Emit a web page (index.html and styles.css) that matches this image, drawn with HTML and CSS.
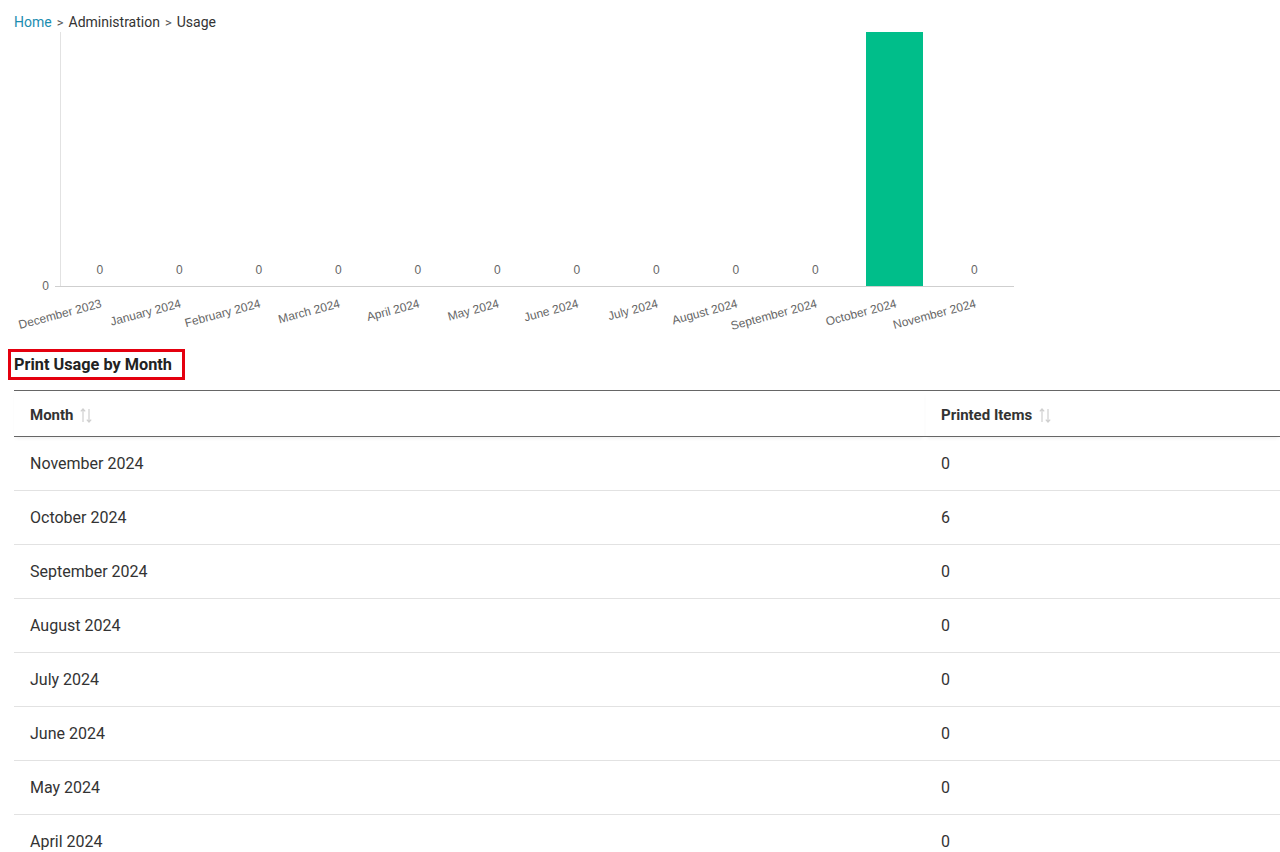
FILE: index.html
```html
<!DOCTYPE html>
<html lang="en">
<head>
  <meta charset="UTF-8" />
  <title>Usage</title>
  <link rel="stylesheet" href="styles.css">
</head>
<body>

<div class="page">
  <nav class="crumbs">
    <a href="#">Home</a><span class="sep">&gt;</span><span>Administration</span><span class="sep">&gt;</span><span>Usage</span>
  </nav>

  <svg class="chart" width="1020" height="312" viewBox="0 0 1020 312">
    <line x1="60.5" y1="2" x2="60.5" y2="256" stroke="#e2e2e2" />
    <line x1="55" y1="256.5" x2="1014" y2="256.5" stroke="#cfcfcf" />
    <text class="ytick" x="49" y="260">0</text>
    <rect x="866" y="2" width="57" height="254" fill="#00be8a" />
    <g id="vals"></g>
    <g id="cats"></g>
  </svg>

  <h2 class="title"><span>Print Usage by Month</span></h2>

  <table class="usage">
    <thead>
      <tr>
        <th class="c-month">Month <span class="sort"><svg width="12" height="15" viewBox="0 0 12 15"><path d="M3 1v13M0.8 3.4L3 1l2.2 2.4M9 1v13M6.8 11.6L9 14l2.2-2.4" fill="none" stroke="#cfcfcf" stroke-width="1.2"/></svg></span></th>
        <th>Printed Items <span class="sort"><svg width="12" height="15" viewBox="0 0 12 15"><path d="M3 1v13M0.8 3.4L3 1l2.2 2.4M9 1v13M6.8 11.6L9 14l2.2-2.4" fill="none" stroke="#cfcfcf" stroke-width="1.2"/></svg></span></th>
      </tr>
    </thead>
    <tbody>
      <tr><td>November 2024</td><td>0</td></tr>
      <tr><td>October 2024</td><td>6</td></tr>
      <tr><td>September 2024</td><td>0</td></tr>
      <tr><td>August 2024</td><td>0</td></tr>
      <tr><td>July 2024</td><td>0</td></tr>
      <tr><td>June 2024</td><td>0</td></tr>
      <tr><td>May 2024</td><td>0</td></tr>
      <tr><td>April 2024</td><td>0</td></tr>
    </tbody>
  </table>
</div>

<script>
  var months = ['December 2023', 'January 2024', 'February 2024', 'March 2024', 'April 2024', 'May 2024',
    'June 2024', 'July 2024', 'August 2024', 'September 2024', 'October 2024', 'November 2024'];
  var ns = 'http://www.w3.org/2000/svg';
  var vals = document.getElementById('vals');
  var cats = document.getElementById('cats');

  months.forEach(function (m, i) {
    var cx = 60 + 79.5 * (i + 0.5);

    if (m !== 'October 2024') {
      var v = document.createElementNS(ns, 'text');
      v.setAttribute('class', 'val');
      v.setAttribute('x', cx.toFixed(1));
      v.setAttribute('y', 244);
      v.textContent = '0';
      vals.appendChild(v);
    }

    var t = document.createElementNS(ns, 'text');
    t.setAttribute('class', 'cat');
    t.setAttribute('x', (cx + 2.5).toFixed(1));
    t.setAttribute('y', 277);
    t.setAttribute('transform', 'rotate(-15 ' + (cx + 2.5).toFixed(1) + ' 277)');
    t.textContent = m;
    cats.appendChild(t);
  });
</script>

</body>
</html>
```

FILE: styles.css
```css
body {
  margin: 0;
  background: #fff;
  color: #333;
  font-family: Roboto, 'Liberation Sans', sans-serif;
}
.page {
  padding: 13px 0 0 14px;
  overflow: hidden;
}
.crumbs {
  font-size: 14px;
  line-height: 18px;
  color: #333;
}
.crumbs a {
  color: #1b8db0;
  text-decoration: none;
}
.crumbs .sep {
  margin: 0 5px;
  color: #555;
  font-size: 13px;
}
.chart {
  display: block;
  margin-left: -14px;
  margin-top: -2px;
}
.chart text {
  font-family: 'Liberation Sans', Arial, sans-serif;
  font-size: 12px;
  fill: #666;
}
.chart .val {
  text-anchor: middle;
}
.chart .ytick,
.chart .cat {
  text-anchor: end;
}
.title {
  margin: 7px 0 0 -6px;
  font-size: 16.3px;
  line-height: 19px;
  font-weight: bold;
  color: #222;
}
.title span {
  display: inline-block;
  border: 3px solid #e4000f;
  padding: 3px 10px 3px 3px;
}
.usage {
  margin-top: 10px;
  width: 1266px;
  border-collapse: collapse;
}
.usage th {
  text-align: left;
  font-size: 15px;
  font-weight: bold;
  color: #333;
  height: 40px;
  padding: 5px 16px 0;
  border-top: 1px solid #666;
  border-bottom: 1px solid #666;
  box-shadow: 0 3px 4px -2px rgba(0,0,0,0.08);
}
.usage th.c-month {
  width: 879px;
}
.sort {
  display: inline-block;
  vertical-align: -3px;
  margin-left: 3px;
}
.usage td {
  font-size: 16px;
  color: #333;
  height: 53px;
  padding: 0 16px;
  border-bottom: 1px solid #e2e2e2;
}
```
